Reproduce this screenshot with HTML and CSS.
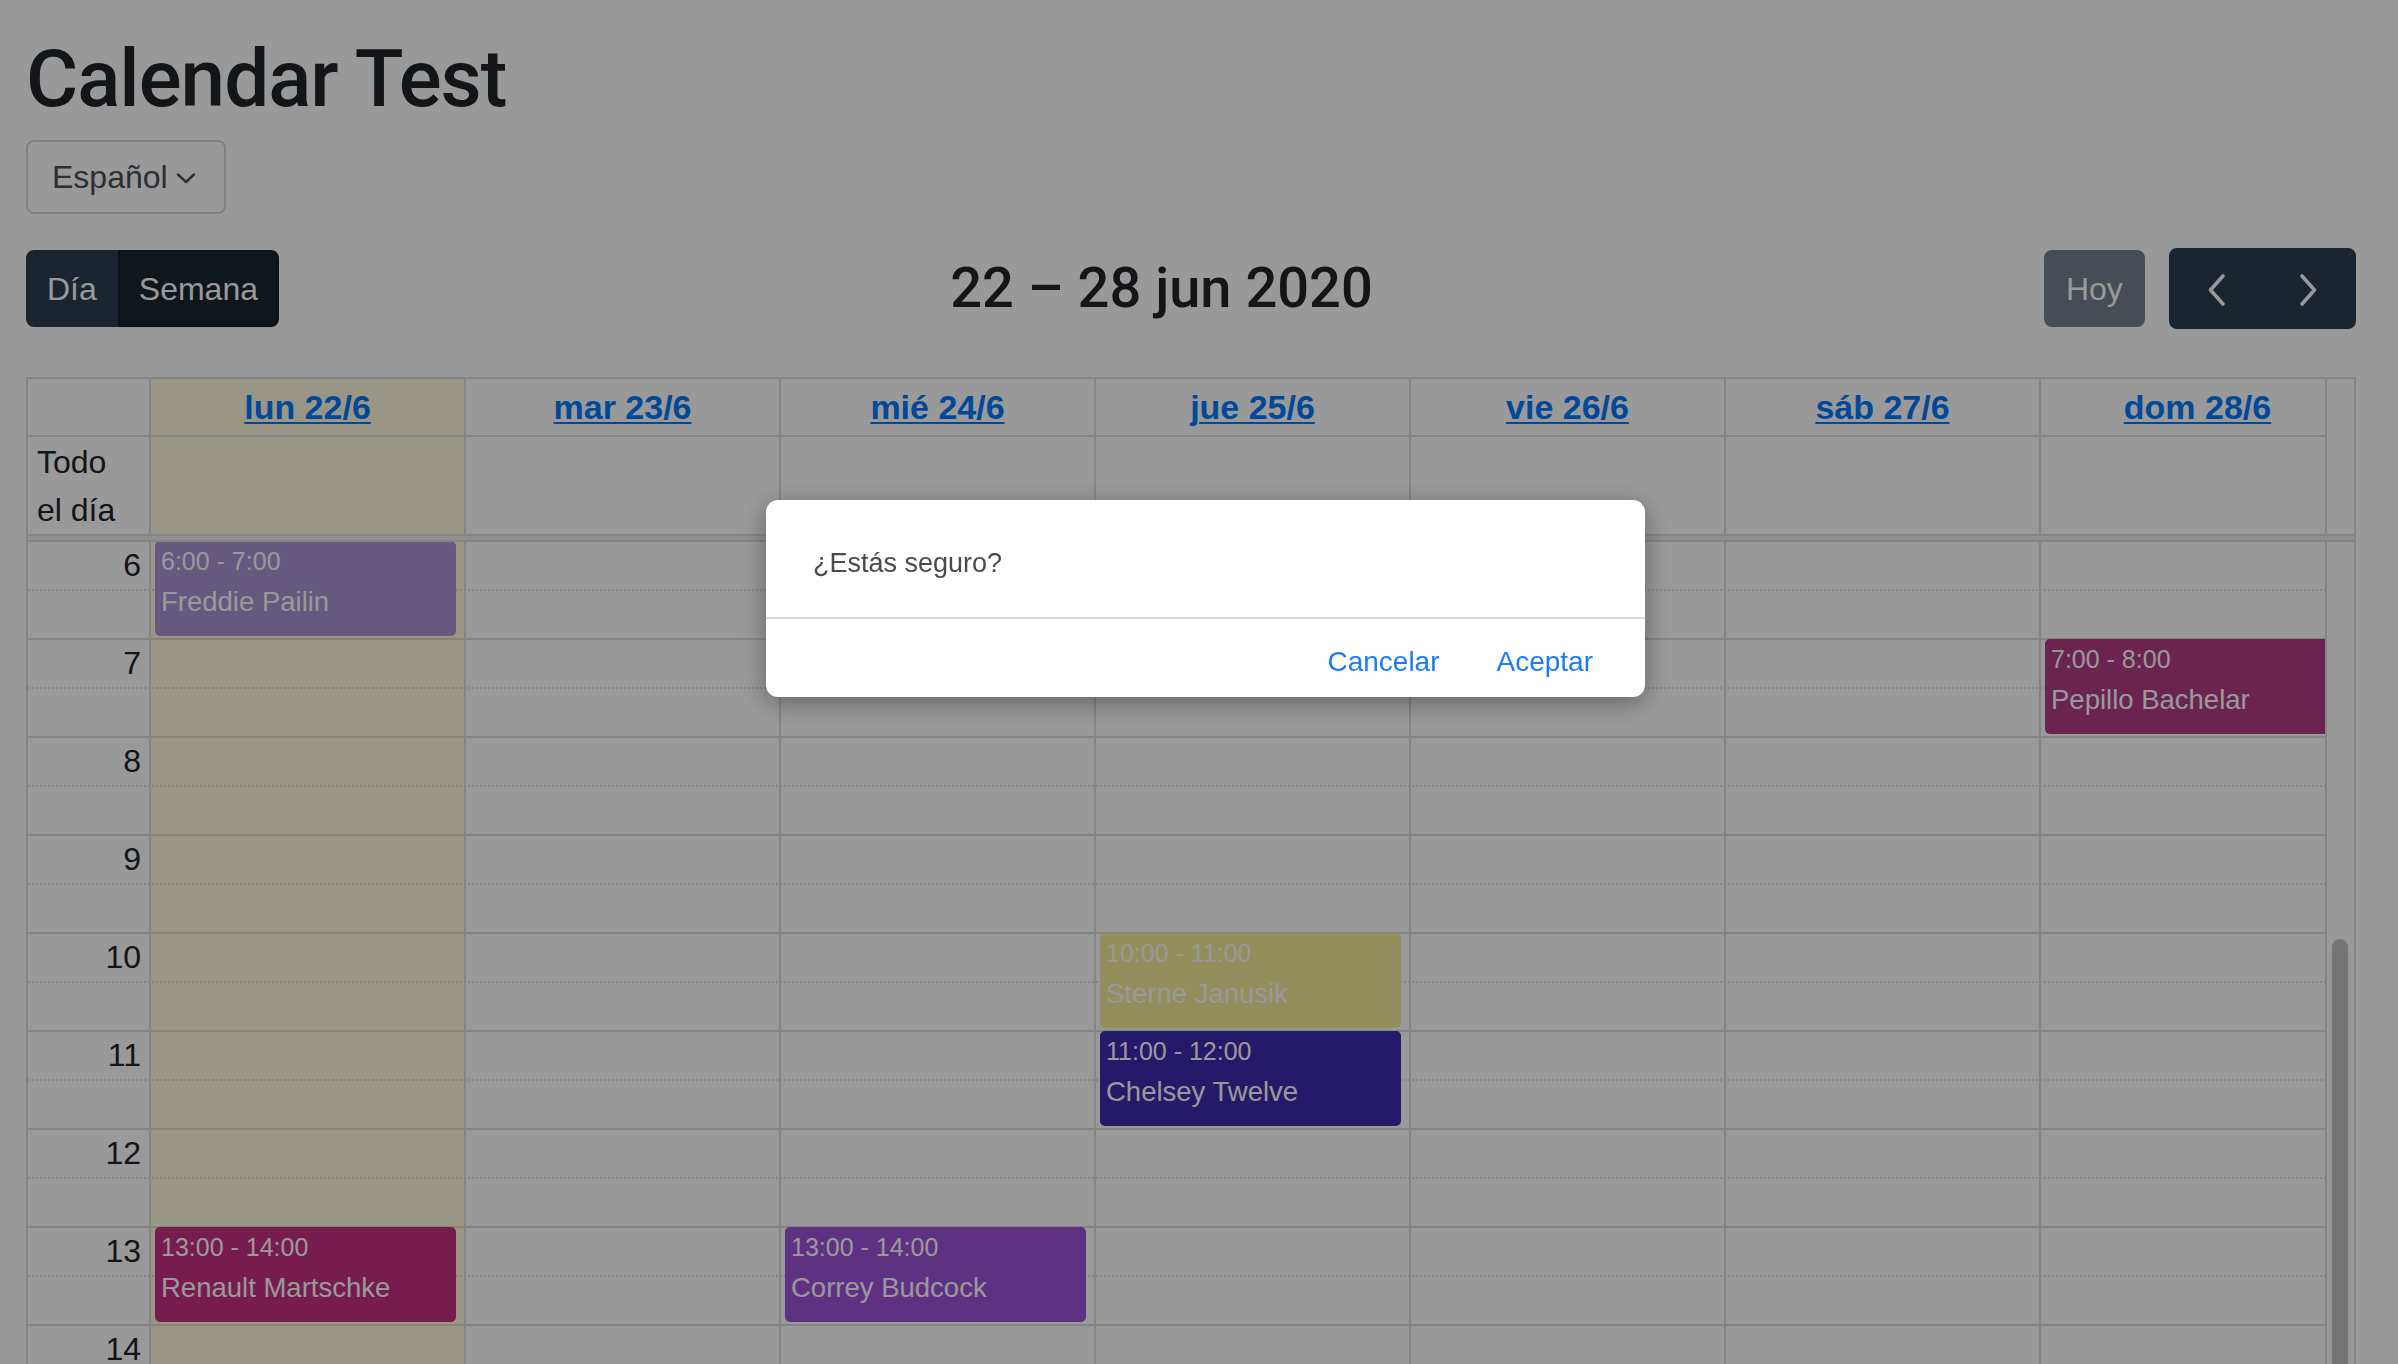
FILE: index.html
```html
<!DOCTYPE html>
<html lang="es">
<head>
<meta charset="utf-8">
<title>Calendar Test</title>
<link rel="stylesheet" href="styles.css">
</head>
<body>
<div class="page">
  <h1 class="title">Calendar Test</h1>
  <div class="lang">
    <button class="lang-btn">Español
      <svg class="caret" width="22" height="14" viewBox="0 0 22 14"><path d="M3 3.5 L11 11 L19 3.5" fill="none" stroke="currentColor" stroke-width="2.4" stroke-linecap="round" stroke-linejoin="round"/></svg>
    </button>
  </div>

  <div class="toolbar">
    <div class="chunk">
      <div class="btn-group">
        <button class="fc-btn">Día</button>
        <button class="fc-btn active">Semana</button>
      </div>
    </div>
    <div class="chunk">
      <h2 class="cal-title">22 – 28 jun 2020</h2>
    </div>
    <div class="chunk chunk-right">
      <button class="fc-btn today">Hoy</button>
      <div class="btn-group">
        <button class="fc-btn icon" aria-label="prev"><svg width="48" height="48" viewBox="0 0 48 48"><path d="M31 11 L18.5 25 L31 39" fill="none" stroke="currentColor" stroke-width="3.6" stroke-linecap="round" stroke-linejoin="round"/></svg></button>
        <button class="fc-btn icon" aria-label="next"><svg width="48" height="48" viewBox="0 0 48 48"><path d="M17 11 L29.5 25 L17 39" fill="none" stroke="currentColor" stroke-width="3.6" stroke-linecap="round" stroke-linejoin="round"/></svg></button>
      </div>
    </div>
  </div>

  <div class="scrollgrid">
    <div class="section">
      <div class="cols">
        <div class="head-cell axis"></div>
        <div class="head-cell is-today"><a href="#">lun 22/6</a></div>
        <div class="head-cell"><a href="#">mar 23/6</a></div>
        <div class="head-cell"><a href="#">mié 24/6</a></div>
        <div class="head-cell"><a href="#">jue 25/6</a></div>
        <div class="head-cell"><a href="#">vie 26/6</a></div>
        <div class="head-cell"><a href="#">sáb 27/6</a></div>
        <div class="head-cell"><a href="#">dom 28/6</a></div>
      </div>
      <div class="track"></div>
    </div>

    <div class="section allday">
      <div class="cols">
        <div class="allday-axis"><span class="allday-label">Todo el día</span></div>
        <div class="allday-cell is-today"></div>
        <div class="allday-cell"></div>
        <div class="allday-cell"></div>
        <div class="allday-cell"></div>
        <div class="allday-cell"></div>
        <div class="allday-cell"></div>
        <div class="allday-cell"></div>
      </div>
      <div class="track"></div>
    </div>

    <div class="divider"></div>

    <div class="section tg-body">
      <div class="slots">
        <div class="slot minor"><div class="slot-label">6</div></div><div class="slot"></div>
        <div class="slot minor"><div class="slot-label">7</div></div><div class="slot"></div>
        <div class="slot minor"><div class="slot-label">8</div></div><div class="slot"></div>
        <div class="slot minor"><div class="slot-label">9</div></div><div class="slot"></div>
        <div class="slot minor"><div class="slot-label">10</div></div><div class="slot"></div>
        <div class="slot minor"><div class="slot-label">11</div></div><div class="slot"></div>
        <div class="slot minor"><div class="slot-label">12</div></div><div class="slot"></div>
        <div class="slot minor"><div class="slot-label">13</div></div><div class="slot"></div>
        <div class="slot minor"><div class="slot-label">14</div></div><div class="slot"></div>
        <div class="slot minor"><div class="slot-label">15</div></div><div class="slot"></div>
        <div class="slot minor"><div class="slot-label">16</div></div><div class="slot"></div>
        <div class="slot minor"><div class="slot-label">17</div></div><div class="slot"></div>
        <div class="slot minor"><div class="slot-label">18</div></div><div class="slot"></div>
        <div class="slot minor"><div class="slot-label">19</div></div><div class="slot"></div>
        <div class="slot minor"><div class="slot-label">20</div></div><div class="slot"></div>
        <div class="slot minor"><div class="slot-label">21</div></div><div class="slot"></div>
        <div class="slot minor"><div class="slot-label">22</div></div><div class="slot"></div>
        <div class="slot minor"><div class="slot-label">23</div></div><div class="slot"></div>
      </div>

      <div class="columns">
        <div class="col-axis"></div>
        <div class="col is-today">
          <div class="event" style="top:-1px;height:95px;background:#aa94d5;border-color:#aa94d5">
            <div class="ev-time">6:00 - 7:00</div>
            <div class="ev-title">Freddie Pailin</div>
          </div>
          <div class="event" style="top:685px;height:95px;background:#c63082;border-color:#c63082">
            <div class="ev-time">13:00 - 14:00</div>
            <div class="ev-title">Renault Martschke</div>
          </div>
        </div>
        <div class="col"></div>
        <div class="col">
          <div class="event" style="top:685px;height:95px;background:#9e53da;border-color:#9e53da">
            <div class="ev-time">13:00 - 14:00</div>
            <div class="ev-title">Correy Budcock</div>
          </div>
        </div>
        <div class="col">
          <div class="event" style="top:391px;height:95px;background:#f3ee99;border-color:#f3ee99">
            <div class="ev-time">10:00 - 11:00</div>
            <div class="ev-title">Sterne Janusik</div>
          </div>
          <div class="event" style="top:489px;height:95px;background:#3f2ab1;border-color:#3f2ab1">
            <div class="ev-time">11:00 - 12:00</div>
            <div class="ev-title">Chelsey Twelve</div>
          </div>
        </div>
        <div class="col"></div>
        <div class="col"></div>
        <div class="col">
          <div class="event" style="top:97px;height:95px;background:#b23c85;border-color:#b23c85">
            <div class="ev-time">7:00 - 8:00</div>
            <div class="ev-title">Pepillo Bachelar</div>
          </div>
        </div>
      </div>

      <div class="track"><div class="thumb"></div></div>
    </div>
  </div>
</div>

<div class="backdrop"></div>
<div class="dialog" role="dialog">
  <div class="dialog-msg">¿Estás seguro?</div>
  <div class="dialog-actions">
    <button class="dialog-btn">Cancelar</button>
    <button class="dialog-btn">Aceptar</button>
  </div>
</div>
</body>
</html>
```
FILE: styles.css
```css
* {
  box-sizing: border-box;
}

html,
body {
  margin: 0;
  height: 100%;
  overflow: hidden;
}

body {
  font-family: "Liberation Sans", Arial, sans-serif;
  font-size: 32px;
  line-height: 1.5;
  color: #212529;
  background: #fff;
}

.page {
  padding: 31px 42px 0 26px;
}

.title {
  margin: 0 0 13px;
  font-family: Roboto, "Liberation Sans", Arial, sans-serif;
  font-size: 80px;
  line-height: 96px;
  font-weight: 500;
  letter-spacing: -1px;
}

/* language dropdown */
.lang {
  display: flex;
}

.lang-btn {
  display: flex;
  align-items: center;
  gap: 7px;
  height: 74px;
  padding: 0 27px 0 24px;
  font: inherit;
  color: #495057;
  background: #fff;
  border: 2px solid #d3d8de;
  border-radius: 8px;
}

.caret {
  display: block;
  margin-top: 2px;
}

/* toolbar */
.toolbar {
  display: flex;
  justify-content: space-between;
  align-items: center;
  margin: 34px 0 48px;
}

.chunk {
  display: flex;
  align-items: center;
}

.chunk-right {
  gap: 24px;
}

.cal-title {
  margin: 0;
  font-family: Roboto, "Liberation Sans", Arial, sans-serif;
  font-size: 56px;
  line-height: 1.2;
  font-weight: 500;
}

.btn-group {
  display: flex;
}

.fc-btn {
  font: inherit;
  font-size: 32px;
  line-height: 48px;
  color: #fff;
  background: #2c3e50;
  border: 2px solid #2c3e50;
  border-radius: 8px;
  padding: 12.8px 20px;
}

.btn-group .fc-btn {
  border-radius: 0;
  padding-left: 19px;
  padding-right: 19px;
}

.btn-group .fc-btn:first-child {
  border-radius: 8px 0 0 8px;
}

.btn-group .fc-btn:last-child {
  border-radius: 0 8px 8px 0;
}

.fc-btn.active {
  background: #1a252f;
  border-color: #151e27;
}

.fc-btn.today {
  opacity: 0.65;
}

.btn-group .fc-btn.icon {
  display: flex;
  padding: 14.5px 20.8px;
}

.fc-btn.icon svg {
  display: block;
}

/* grid */
.scrollgrid {
  position: relative;
  z-index: 0;
  border: 2px solid #ddd;
}

.section {
  position: relative;
}

.cols {
  display: grid;
  grid-template-columns: 121px repeat(7, 1fr);
}

.head-cell {
  padding: 4px 0;
  text-align: center;
  font-size: 34px;
  line-height: 48px;
  font-weight: 700;
  border-left: 2px solid #ddd;
  border-bottom: 2px solid #ddd;
}

.head-cell.axis {
  border-left: 0;
}

.head-cell a {
  color: #007bff;
  text-decoration: underline;
  text-decoration-thickness: 2px;
  text-underline-offset: 3px;
}

.is-today {
  background: rgba(255, 220, 40, 0.15);
}

.allday {
  border-bottom: 2px solid #ddd;
}

.allday-axis {
  padding: 1px 8px 0 9px;
  line-height: 48px;
}

.allday-label {
  display: block;
  max-width: 92px;
}

.allday-cell {
  min-height: 97px;
  border-left: 2px solid #ddd;
}

.divider {
  height: 6px;
  background: rgba(208, 208, 208, 0.3);
  border-bottom: 2px solid #ddd;
}

.tg-body {
  height: 1600px;
  overflow: hidden;
}

.slot {
  height: 49px;
  border-bottom: 2px solid #ddd;
}

.slot.minor {
  border-bottom-style: dotted;
}

.slot-label {
  width: 121px;
  padding-right: 8px;
  text-align: right;
  line-height: 47px;
}

.columns {
  position: absolute;
  inset: 0;
  display: grid;
  grid-template-columns: 121px repeat(7, 1fr);
}

.col {
  position: relative;
  border-left: 2px solid #ddd;
}

.event {
  position: absolute;
  left: 4px;
  right: 8px;
  padding: 0 4px 2px;
  border: 2px solid;
  border-radius: 5px;
  color: #fff;
  overflow: hidden;
  white-space: nowrap;
}

.ev-time {
  font-size: 25px;
  line-height: 36px;
}

.ev-title {
  font-size: 27.5px;
  line-height: 46px;
}

/* scrollbar gutter */
.track {
  position: absolute;
  top: 0;
  right: 0;
  bottom: 0;
  width: 29px;
  background: #fff;
  border-left: 2px solid #dcdcdc;
  z-index: 2;
}

.thumb {
  position: absolute;
  top: 397px;
  left: 5px;
  width: 16px;
  height: 1072px;
  border-radius: 8px;
  background: #c1c1c1;
}

/* modal */
.backdrop {
  position: fixed;
  inset: 0;
  z-index: 10;
  background: rgba(0, 0, 0, 0.4);
}

.dialog {
  position: fixed;
  top: 500px;
  left: 766px;
  z-index: 11;
  width: 879px;
  background: #fff;
  border-radius: 12px;
  box-shadow: 0 6px 26px rgba(0, 0, 0, 0.35);
}

.dialog-msg {
  padding: 48px 47px 39px;
  font-size: 27px;
  line-height: 30px;
  color: #4a4a4a;
  border-bottom: 2px solid #dadada;
}

.dialog-actions {
  display: flex;
  justify-content: flex-end;
  gap: 57px;
  padding: 27px 52px 19px;
}

.dialog-btn {
  font: inherit;
  font-size: 28px;
  line-height: 32px;
  color: #1a7cf5;
  background: none;
  border: 0;
  padding: 0;
}
```
